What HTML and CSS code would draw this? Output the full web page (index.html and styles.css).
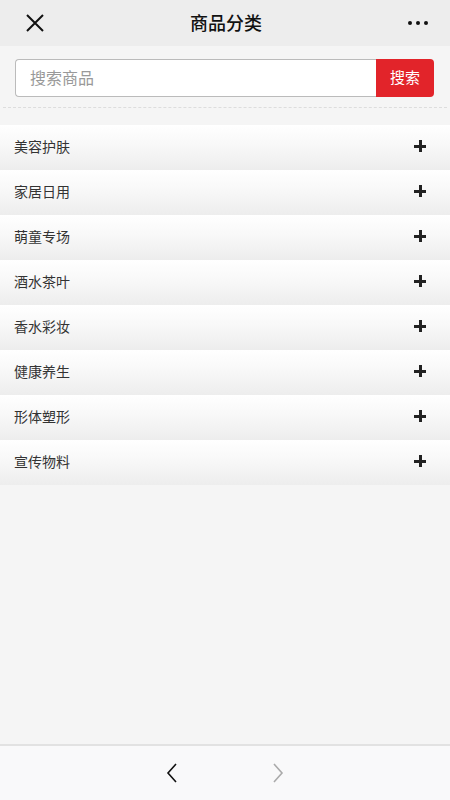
FILE: index.html
```html
<!DOCTYPE html>
<html lang="zh-CN">
<head>
  <meta charset="UTF-8">
  <title>商品分类</title>
  <link rel="stylesheet" href="styles.css">
</head>
<body>
  <header class="topbar">
    <svg class="close" width="18" height="18" viewBox="0 0 18 18">
      <path d="M1 1L17 17M17 1L1 17" stroke="#111" stroke-width="2" fill="none"/>
    </svg>
    <h1>商品分类</h1>
    <div class="more"><span></span><span></span><span></span></div>
  </header>

  <main class="content">
    <form class="search">
      <input type="text" placeholder="搜索商品">
      <button type="button">搜索</button>
    </form>
    <div class="divider"></div>

    <ul class="cats">
      <li>美容护肤<i class="plus"></i></li>
      <li>家居日用<i class="plus"></i></li>
      <li>萌童专场<i class="plus"></i></li>
      <li>酒水茶叶<i class="plus"></i></li>
      <li>香水彩妆<i class="plus"></i></li>
      <li>健康养生<i class="plus"></i></li>
      <li>形体塑形<i class="plus"></i></li>
      <li>宣传物料<i class="plus"></i></li>
    </ul>
  </main>

  <footer class="navbar">
    <svg width="12" height="20" viewBox="0 0 12 20">
      <path d="M10 1L2 10L10 19" stroke="#111" stroke-width="1.6" fill="none"/>
    </svg>
    <svg width="12" height="20" viewBox="0 0 12 20">
      <path d="M2 1L10 10L2 19" stroke="#aaa" stroke-width="1.6" fill="none"/>
    </svg>
  </footer>
</body>
</html>
```

FILE: styles.css
```css
* {
  box-sizing: border-box;
}

body {
  margin: 0;
  height: 800px;
  display: flex;
  flex-direction: column;
  background: #f5f5f5;
  font-family: "Noto Sans CJK SC", "Noto Sans", sans-serif;
  color: #333;
}

.topbar {
  height: 46px;
  background: #ededed;
  display: flex;
  align-items: center;
  justify-content: space-between;
  padding: 0 22px 0 26px;
}

.topbar h1 {
  margin: 0 0 3px;
  font-size: 18px;
  font-weight: 500;
  line-height: 1;
  color: #111;
}

.more {
  display: flex;
  gap: 4px;
}

.more span {
  width: 4px;
  height: 4px;
  border-radius: 50%;
  background: #111;
}

.content {
  flex: 1;
}

.search {
  display: flex;
  margin: 13px 16px 0 15px;
  height: 38px;
}

.search input {
  flex: 1;
  border: 1px solid #bbb;
  border-right: 0;
  border-radius: 4px 0 0 4px;
  padding: 0 14px 3px;
  font-family: inherit;
  font-size: 16px;
  color: #333;
  outline: none;
}

.search input::placeholder {
  color: #999;
}

.search button {
  width: 58px;
  border: 0;
  border-radius: 0 4px 4px 0;
  background: #e2242a;
  color: #fff;
  padding: 0 0 3px;
  font-family: inherit;
  font-size: 15px;
}

.divider {
  margin: 10px 3px 0;
  border-top: 1px dashed #ddd;
}

.cats {
  list-style: none;
  margin: 17px 0 0;
  padding: 0;
}

.cats li {
  height: 45px;
  display: flex;
  align-items: center;
  justify-content: space-between;
  padding: 0 24px 3px 14px;
  font-size: 14px;
  line-height: 1;
  background: linear-gradient(#fff, #f8f8f8 45%, #ededed);
}

.plus {
  position: relative;
  width: 12px;
  height: 12px;
}

.plus::before,
.plus::after {
  content: "";
  position: absolute;
  background: #222;
}

.plus::before {
  left: 0;
  top: 4.5px;
  width: 12px;
  height: 3px;
}

.plus::after {
  left: 4.5px;
  top: 0;
  width: 3px;
  height: 12px;
}

.navbar {
  height: 56px;
  border-top: 2px solid #e2e2e2;
  background: #f9f9fa;
  display: flex;
  align-items: center;
  justify-content: center;
  gap: 94px;
}
```
